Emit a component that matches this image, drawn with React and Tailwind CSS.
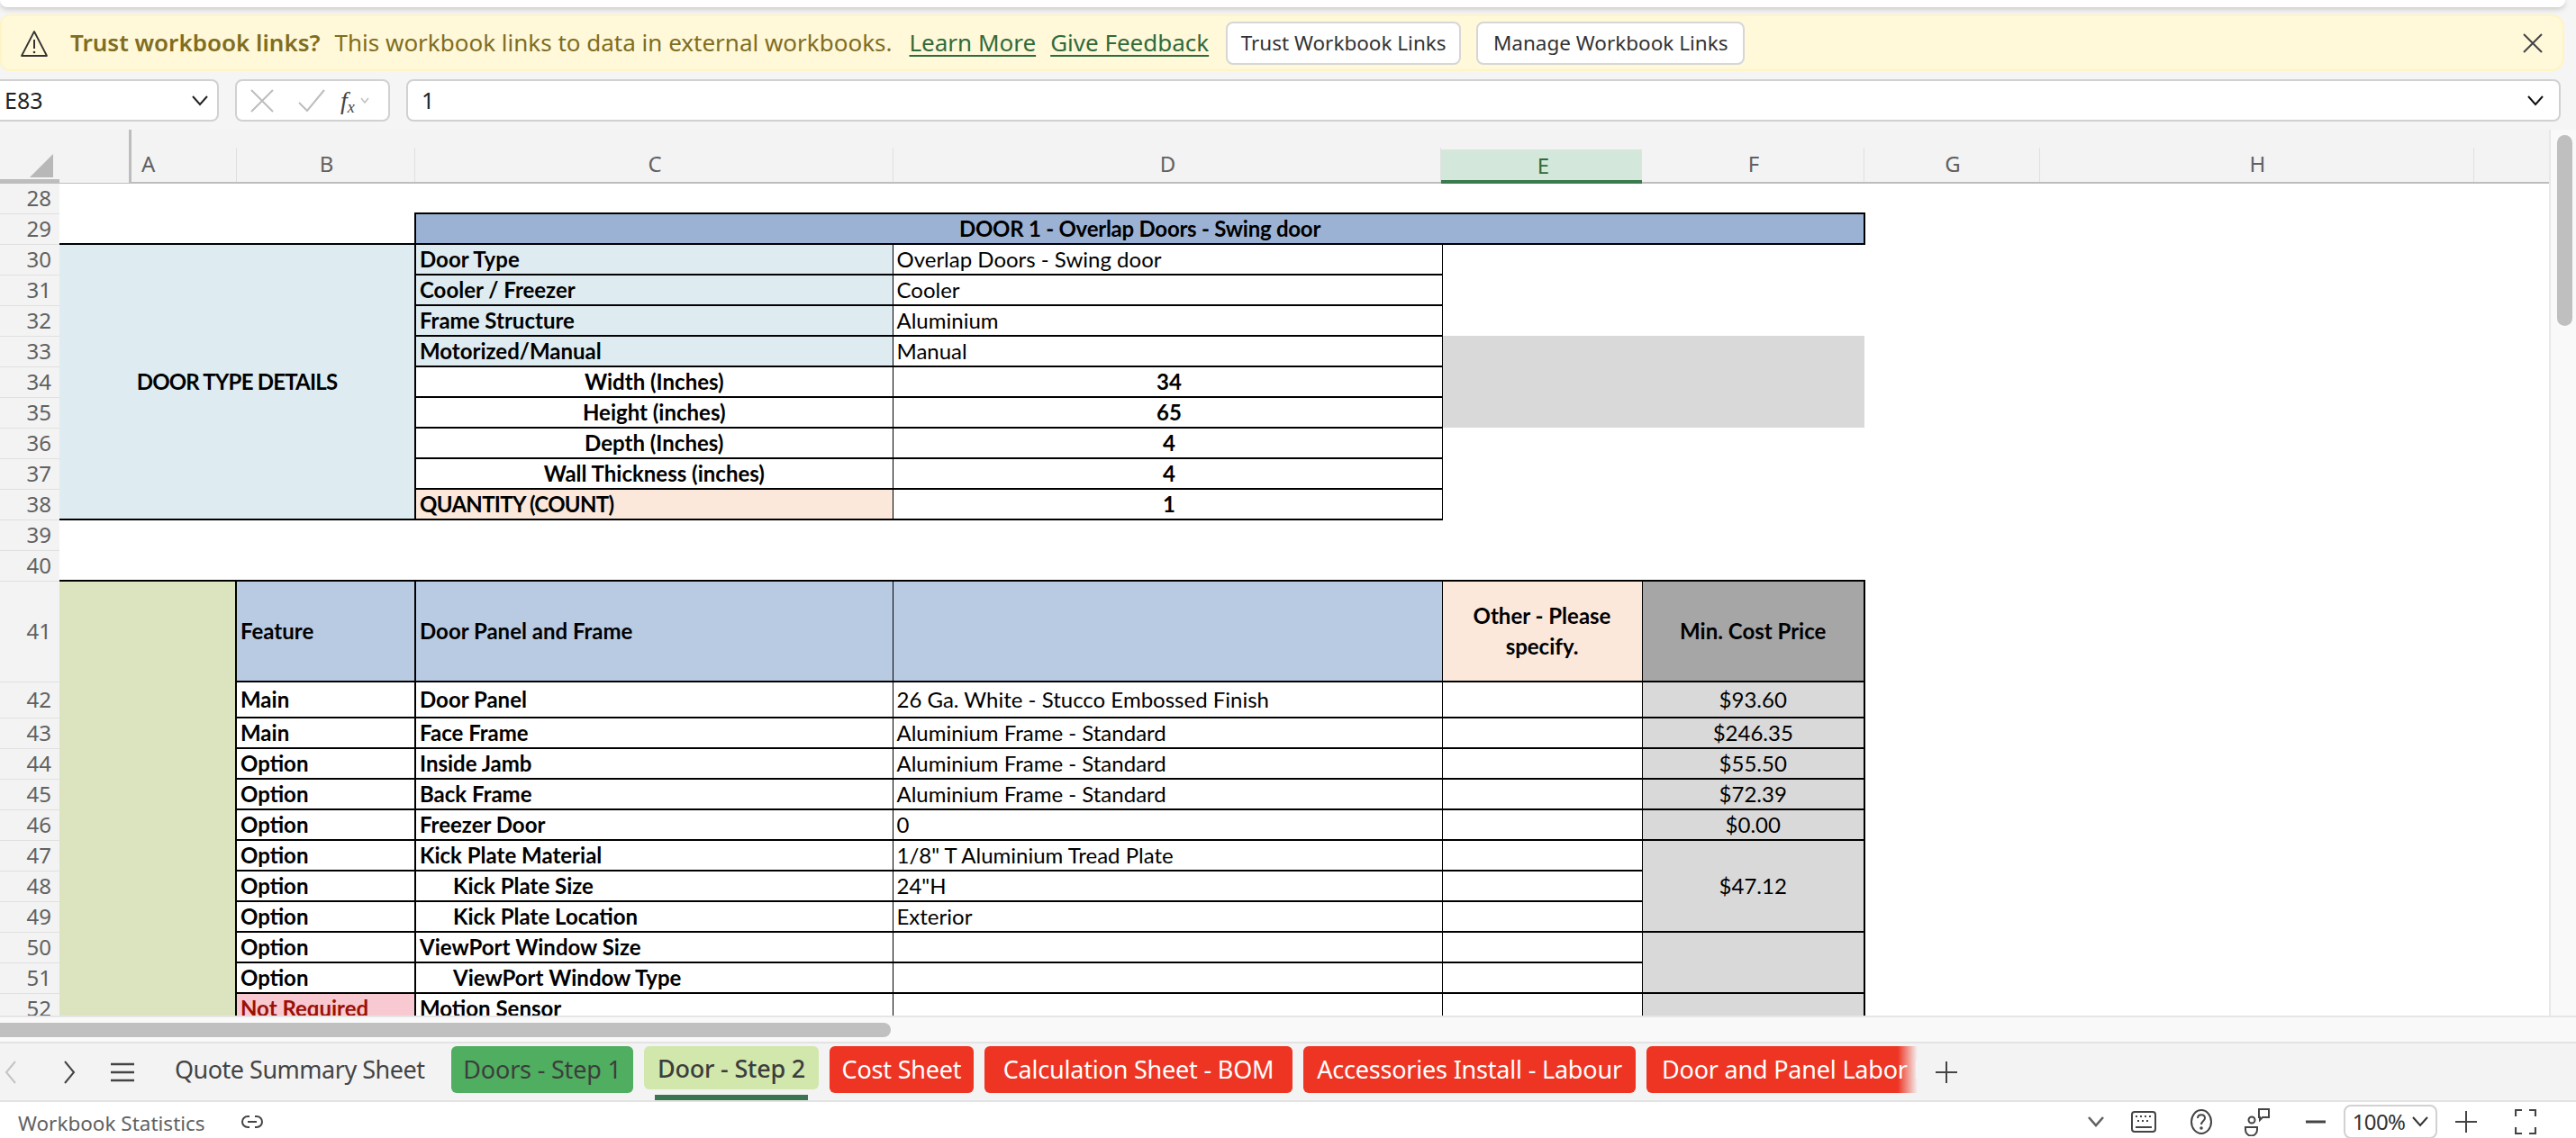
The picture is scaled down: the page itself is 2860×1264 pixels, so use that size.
import React from 'react';

const ui = "font-['Noto_Sans',sans-serif]";
const sheet = "font-['Lato',sans-serif]";

const Line = ({ d, className, w = 24, h = 24, sw = 1.6, stroke = 'currentColor' }) => (
  <svg width={w} height={h} viewBox={`0 0 ${w} ${h}`} fill="none" stroke={stroke} strokeWidth={sw} className={className}>
    <path d={d} />
  </svg>
);

const columns = [
  { l: 'B', w: 198 },
  { l: 'C', w: 531 },
  { l: 'D', w: 608 },
  { l: 'E', w: 223, sel: true },
  { l: 'F', w: 247 },
  { l: 'G', w: 195 },
  { l: 'H', w: 482 },
];

function ColumnHeader() {
  return (
    <div className={`flex h-[60px] ${ui} text-[24px] text-[#616161]`}>
      <div className="relative flex-none w-[66px] flex items-end justify-end">
        <svg width="26" height="26" viewBox="0 0 26 26" className="mb-[7px] mr-[7px]"><path d="M26 0V26H0Z" fill="#b8b8b8" /></svg>
        <div className="absolute left-0 right-0 bottom-0 h-[5px] bg-[#bdbdbd]" />
      </div>
      <div className="flex-none w-[80px] flex justify-end border-b border-[#bdbdbd]">
        <div className="w-[3px] bg-[#bdbdbd]" />
      </div>
      <div className="flex-1 flex items-end border-b-2 border-[#bdbdbd] pr-0">
        <div className="flex-none w-[117px] h-[38px] pl-[11px] leading-[36px] border-r border-[#e0e0e0]">A</div>
        {columns.map((c) =>
          c.sel ? (
            <div key={c.l} className="flex-none h-[38px] pl-[4px] text-center leading-[36px] bg-[#d3e8da] text-[#2f6b3c] border-b-4 border-[#3b7a4c] -mb-[2px]" style={{ width: c.w }}>{c.l}</div>
          ) : (
            <div key={c.l} className="flex-none h-[38px] pl-[2px] text-center leading-[36px] border-r border-[#e0e0e0]" style={{ width: c.w }}>{c.l}</div>
          )
        )}
      </div>
    </div>
  );
}

const Num = ({ n, h }) => (
  <td className={`p-0 bg-[#f3f3f3] border-b border-[#e0e0e0] text-right pr-[9px] ${ui} text-[24px] font-normal text-[#616161] leading-none`} style={{ height: h }}>{n}</td>
);

const line = 'border-y-2 border-x border-black';
const Label = ({ children, bg = '', indent, caps }) => (
  <td className={`p-0 ${indent ? 'pl-[41px]' : 'pl-[4px]'} ${line} border-l-2 font-bold whitespace-nowrap overflow-hidden ${caps ? 'tracking-[-0.7px]' : ''} ${bg}`}>{children}</td>
);
const Val = ({ children, bold, center }) => (
  <td className={`p-0 pl-[4px] ${line} whitespace-nowrap overflow-hidden ${bold ? 'font-bold' : ''} ${center ? 'text-center' : ''}`}>{children}</td>
);
const Blank = () => <td className={`p-0 ${line}`} />;

const detailRows = [
  [31, 'Cooler / Freezer', 'Cooler'],
  [32, 'Frame Structure', 'Aluminium'],
];
const sizeRows = [
  [36, 'Depth (Inches)', '4'],
  [37, 'Wall Thickness (inches)', '4'],
];
const featureRows = [
  [43, 'Main', 'Face Frame', 'Aluminium Frame - Standard', '$246.35'],
  [44, 'Option', 'Inside Jamb', 'Aluminium Frame - Standard', '$55.50'],
  [45, 'Option', 'Back Frame', 'Aluminium Frame - Standard', '$72.39'],
  [46, 'Option', 'Freezer Door', '0', '$0.00'],
];
const Price = ({ children, rowSpan }) => (
  <td rowSpan={rowSpan} className="p-0 text-center bg-[#d9d9d9] border-y-2 border-l border-r-2 border-black">{children}</td>
);

function Sheet() {
  return (
    <table className={`table-fixed border-collapse w-[2070px] ${sheet} text-[24px] leading-none text-black`}>
      <colgroup>
        <col className="w-[66px]" />
        <col className="w-[196px]" />
        <col className="w-[199px]" />
        <col className="w-[530px]" />
        <col className="w-[610px]" />
        <col className="w-[222px]" />
        <col className="w-[247px]" />
      </colgroup>
      <tbody>
        <tr>
          <Num n={28} h={33} />
          <td colSpan={6} className="p-0" />
        </tr>
        <tr>
          <Num n={29} h={34} />
          <td colSpan={2} className="p-0" />
          <td colSpan={4} className="p-0 text-center font-bold tracking-[-0.25px] bg-[#9bb2d4] border-2 border-black">DOOR 1 - Overlap Doors - Swing door</td>
        </tr>
        <tr>
          <Num n={30} h={34} />
          <td colSpan={2} rowSpan={9} className="p-0 text-center font-bold tracking-[-0.8px] bg-[#deecf1] border-y-2 border-black">DOOR TYPE DETAILS</td>
          <Label bg="bg-[#deecf1]">Door Type</Label>
          <Val>Overlap Doors - Swing door</Val>
          <td colSpan={2} className="p-0" />
        </tr>
        {detailRows.map(([n, a, b]) => (
          <tr key={n}>
            <Num n={n} h={34} />
            <Label bg="bg-[#deecf1]">{a}</Label>
            <Val>{b}</Val>
            <td colSpan={2} className="p-0" />
          </tr>
        ))}
        <tr>
          <Num n={33} h={34} />
          <Label bg="bg-[#deecf1]">Motorized/Manual</Label>
          <Val>Manual</Val>
          <td colSpan={2} rowSpan={3} className="p-0 bg-[#d9d9d9]" />
        </tr>
        <tr>
          <Num n={34} h={34} />
          <td className={`p-0 ${line} border-l-2 text-center font-bold`}>Width (Inches)</td>
          <Val bold center>34</Val>
        </tr>
        <tr>
          <Num n={35} h={34} />
          <td className={`p-0 ${line} border-l-2 text-center font-bold`}>Height (inches)</td>
          <Val bold center>65</Val>
        </tr>
        {sizeRows.map(([n, a, b]) => (
          <tr key={n}>
            <Num n={n} h={34} />
            <td className={`p-0 ${line} border-l-2 text-center font-bold`}>{a}</td>
            <Val bold center>{b}</Val>
            <td colSpan={2} className="p-0" />
          </tr>
        ))}
        <tr>
          <Num n={38} h={34} />
          <Label caps bg="bg-[#fbe8db]">QUANTITY (COUNT)</Label>
          <Val bold center>1</Val>
          <td colSpan={2} className="p-0" />
        </tr>
        <tr>
          <Num n={39} h={34} />
          <td colSpan={6} className="p-0" />
        </tr>
        <tr>
          <Num n={40} h={34} />
          <td colSpan={6} className="p-0" />
        </tr>
        <tr>
          <Num n={41} h={112} />
          <td rowSpan={12} className="p-0 bg-[#dbe4bf] border-t-2 border-r-2 border-black" />
          <Label bg="bg-[#b9cbe2]">Feature</Label>
          <Label bg="bg-[#b9cbe2]">Door Panel and Frame</Label>
          <td className={`p-0 bg-[#b9cbe2] ${line}`} />
          <td className={`p-0 bg-[#fbe8db] ${line} text-center font-bold leading-[34px]`}>Other - Please<br />specify.</td>
          <td className="p-0 bg-[#a6a6a6] border-y-2 border-l border-r-2 border-black text-center font-bold">Min. Cost Price</td>
        </tr>
        <tr>
          <Num n={42} h={40} />
          <Label>Main</Label>
          <Label>Door Panel</Label>
          <Val>26 Ga. White - Stucco Embossed Finish</Val>
          <Blank />
          <Price>$93.60</Price>
        </tr>
        {featureRows.map(([n, a, b, c, d]) => (
          <tr key={n}>
            <Num n={n} h={34} />
            <Label>{a}</Label>
            <Label>{b}</Label>
            <Val>{c}</Val>
            <Blank />
            <Price>{d}</Price>
          </tr>
        ))}
        <tr>
          <Num n={47} h={34} />
          <Label>Option</Label>
          <Label>Kick Plate Material</Label>
          <Val>1/8" T Aluminium Tread Plate</Val>
          <Blank />
          <Price rowSpan={3}>$47.12</Price>
        </tr>
        <tr>
          <Num n={48} h={34} />
          <Label>Option</Label>
          <Label indent>Kick Plate Size</Label>
          <Val>24"H</Val>
          <Blank />
        </tr>
        <tr>
          <Num n={49} h={34} />
          <Label>Option</Label>
          <Label indent>Kick Plate Location</Label>
          <Val>Exterior</Val>
          <Blank />
        </tr>
        <tr>
          <Num n={50} h={34} />
          <Label>Option</Label>
          <Label>ViewPort Window Size</Label>
          <Blank />
          <Blank />
          <Price rowSpan={2} />
        </tr>
        <tr>
          <Num n={51} h={34} />
          <Label>Option</Label>
          <Label indent>ViewPort Window Type</Label>
          <Blank />
          <Blank />
        </tr>
        <tr>
          <Num n={52} h={34} />
          <Label bg="bg-[#f8c9d0] text-[#9c1006]">Not Required</Label>
          <Label>Motion Sensor</Label>
          <Blank />
          <Blank />
          <Price />
        </tr>
      </tbody>
    </table>
  );
}

function Banner() {
  return (
    <div className={`mx-0 mr-[13px] h-[63px] flex items-center rounded-r-[14px] rounded-l-[10px] bg-[#fff8d9] border-2 border-[#fff4c4] ${ui} text-[26px]`}>
      <svg width="32" height="32" viewBox="0 0 32 32" fill="none" className="ml-[20px] flex-none">
        <path d="M16 3 L30 30 H2 Z" stroke="#333" strokeWidth="1.8" strokeLinejoin="round" />
        <path d="M16 12V22" stroke="#333" strokeWidth="2" />
        <circle cx="16" cy="26" r="1.3" fill="#333" />
      </svg>
      <span className="ml-[24px] font-semibold text-[#7f6d1f] whitespace-nowrap">Trust workbook links?</span>
      <span className="ml-[16px] text-[#7f6d1f] whitespace-nowrap">This workbook links to data in external workbooks.</span>
      <a className="ml-[19px] text-[#2f6b3c] underline underline-offset-4 whitespace-nowrap">Learn More</a>
      <a className="ml-[16px] text-[#2f6b3c] underline underline-offset-4 whitespace-nowrap">Give Feedback</a>
      <button className="ml-[19px] h-[48px] w-[261px] flex-none rounded-lg bg-white border-2 border-[#d6d6d6] text-[22.5px] text-[#333]">Trust Workbook Links</button>
      <button className="ml-[17px] h-[48px] w-[298px] flex-none rounded-lg bg-white border-2 border-[#d6d6d6] text-[22.5px] text-[#333]">Manage Workbook Links</button>
      <div className="flex-1" />
      <Line className="mr-[21px] text-[#444]" w={24} h={24} sw={2} d="M2 2L22 22M22 2L2 22" />
    </div>
  );
}

function FormulaBar() {
  return (
    <div className={`flex h-[47px] mr-[17px] gap-[18px] ${ui} text-[25px] text-[#222]`}>
      <div className="flex-none w-[243px] flex items-center justify-between pl-[5px] pr-[9px] bg-white border-2 border-l-0 border-[#d1d1d1] rounded-r-lg">
        <span>E83</span>
        <Line className="text-[#222]" w={20} h={12} sw={2} d="M2 1L10 10L18 1" />
      </div>
      <div className="flex-none w-[172px] flex items-center pl-[15px] bg-white border-2 border-[#d1d1d1] rounded-lg">
        <Line className="text-[#bdbdbd]" w={26} h={26} sw={2} d="M1 1L25 25M25 1L1 25" />
        <Line className="ml-[26px] text-[#bdbdbd]" w={32} h={26} sw={2} d="M2 15L11 24L30 1" />
        <span className="ml-[16px] font-['Liberation_Serif',serif] italic text-[28px] leading-none text-[#444]">f<sub className="text-[18px]">x</sub></span>
        <Line className="ml-[6px] text-[#bdbdbd]" w={10} h={7} sw={1.4} d="M1 1L5 6L9 1" />
      </div>
      <div className="flex-1 flex items-center justify-between pl-[15px] pr-[16px] bg-white border-2 border-[#d1d1d1] rounded-lg">
        <span>1</span>
        <Line className="text-[#111]" w={20} h={12} sw={2} d="M2 1L10 10L18 1" />
      </div>
    </div>
  );
}

function SheetTabs() {
  const red = 'bg-[#ee3524] text-white';
  return (
    <div className={`h-[67px] flex bg-[#f3f3f3] border-y-2 border-[#e3e3e3] ${ui} text-[27px] tracking-[-0.2px]`}>
      <div className="flex-none w-[194px] flex items-center">
        <Line className="ml-[5px] text-[#c4c4c4]" w={14} h={28} sw={2} d="M12 2L2 14L12 26" />
        <Line className="ml-[51px] text-[#444]" w={14} h={28} sw={2} d="M2 2L12 14L2 26" />
        <Line className="ml-[39px] text-[#444]" w={26} h={24} sw={2.4} d="M0 3H26M0 12H26M0 21H26" />
      </div>
      <div className="relative flex-none w-[1935px] overflow-hidden flex items-start pt-[3px] whitespace-nowrap">
        <div className="flex-none w-[307px] h-[52px] flex items-center text-[#444] tracking-[-0.5px]">Quote Summary Sheet</div>
        <div className="flex-none w-[202px] h-[52px] flex items-center justify-center rounded-md bg-[#4fae5f] text-[#3d3d3d]">Doors - Step 1</div>
        <div className="relative flex-none ml-[12px] w-[194px] h-[48px] pt-[3px] flex items-center justify-center rounded-md bg-[#d1e7ac] text-[#3d3d3d] font-medium">
          Door - Step 2
          <div className="absolute left-[12px] right-[12px] top-[54px] h-[6px] bg-[#3a7550]" />
        </div>
        <div className={`flex-none ml-[12px] w-[160px] h-[52px] flex items-center justify-center rounded-md ${red}`}>Cost Sheet</div>
        <div className={`flex-none ml-[12px] w-[342px] h-[52px] flex items-center justify-center rounded-md ${red}`}>Calculation Sheet - BOM</div>
        <div className={`flex-none ml-[12px] w-[369px] h-[52px] flex items-center justify-center rounded-md ${red}`}>Accessories Install - Labour</div>
        <div className={`flex-none ml-[12px] w-[340px] h-[52px] flex items-center pl-[17px] rounded-md ${red}`}>Door and Panel Labor Breakdown</div>
        <div className="absolute right-0 top-0 bottom-0 w-[22px] bg-gradient-to-r from-transparent to-[#f3f3f3]" />
      </div>
      <div className="flex-none ml-[20px] flex items-center">
        <Line className="text-[#444]" w={24} h={24} sw={2} d="M12 0V24M0 12H24" />
      </div>
    </div>
  );
}

function StatusBar() {
  return (
    <div className={`h-[40px] pt-[4px] flex items-center bg-white ${ui} text-[22.5px] text-[#616161]`}>
      <span className="ml-[20px] mt-[3px]">Workbook Statistics</span>
      <svg width="26" height="16" viewBox="0 0 26 16" fill="none" stroke="#444" strokeWidth="2" className="ml-[39px]">
        <path d="M10 2H8a6 6 0 0 0 0 12h2M16 2h2a6 6 0 0 1 0 12h-2M8 8h10" />
      </svg>
      <div className="flex-1" />
      <Line className="text-[#616161]" w={18} h={12} sw={2.6} d="M1 1L9 10L17 1" />
      <svg width="28" height="24" viewBox="0 0 28 24" fill="none" stroke="#444" strokeWidth="2" className="ml-[30px]">
        <rect x="1" y="1" width="26" height="22" rx="3" />
        <path d="M5 6h2M10 6h2M15 6h2M20 6h2M7 11h2M12 11h2M17 11h2M5 18h18" />
      </svg>
      <svg width="26" height="30" viewBox="0 0 26 30" fill="none" stroke="#444" strokeWidth="2" className="ml-[37px]">
        <ellipse cx="13" cy="15" rx="11" ry="13" />
        <path d="M9 11c0-5 8-5 8 0c0 3-4 3-4 7" />
        <circle cx="13" cy="22" r="0.8" fill="#444" />
      </svg>
      <svg width="28" height="32" viewBox="0 0 28 32" fill="none" stroke="#444" strokeWidth="2" className="ml-[35px]">
        <circle cx="8" cy="14" r="3.5" />
        <path d="M1 22h13v3a6 6 0 0 1-13 0Z" />
        <path d="M16 2h11v9h-7l-3 3v-3h-1Z" />
      </svg>
      <Line className="ml-[40px] text-[#444]" w={22} h={4} sw={3} d="M0 2H22" />
      <div className="ml-[20px] w-[104px] h-[38px] flex-none flex items-center justify-center gap-[8px] border-2 border-[#d1d1d1] rounded-lg text-[24px] text-[#333] tracking-[-0.6px]">
        <span>100%</span>
        <Line className="text-[#333]" w={18} h={12} sw={2} d="M1 1L9 10L17 1" />
      </div>
      <Line className="ml-[20px] text-[#444]" w={24} h={24} sw={2} d="M12 0V24M0 12H24" />
      <Line className="ml-[42px] text-[#444]" w={24} h={28} sw={2.2} d="M1 8V1H8M16 1H23V8M23 20V27H16M8 27H1V20" />
      <div className="w-[44px] flex-none" />
    </div>
  );
}

export default function App() {
  return (
    <div className="w-[2860px] h-[1264px] overflow-hidden flex flex-col bg-[#f5f5f5]">
      <div className="flex-none h-[8px] mr-[12px] bg-white rounded-b-xl shadow-[0_2px_6px_rgba(0,0,0,0.2)]" />
      <div className="h-[8px] flex-none" />
      <Banner />
      <div className="h-[9px] flex-none" />
      <FormulaBar />
      <div className="h-[9px] flex-none" />
      <div className="flex-1 min-h-0 flex">
        <div className="w-[2830px] flex-none flex flex-col min-h-0 bg-[#f3f3f3]">
          <ColumnHeader />
          <div className="flex-1 min-h-0 overflow-hidden bg-white">
            <Sheet />
          </div>
        </div>
        <div className="w-[30px] flex-none bg-[#f9f9f9] border-l-2 border-[#e8e8e8] pt-[6px] pl-[7px]">
          <div className="w-[17px] h-[212px] rounded-full bg-[#bfbfbf]" />
        </div>
      </div>
      <div className="h-[29px] flex-none bg-[#f9f9f9] border-t-2 border-[#e6e6e6] pt-[6px]">
        <div className="w-[989px] h-[16px] rounded-r-full bg-[#c0c0c0]" />
      </div>
      <SheetTabs />
      <StatusBar />
    </div>
  );
}
